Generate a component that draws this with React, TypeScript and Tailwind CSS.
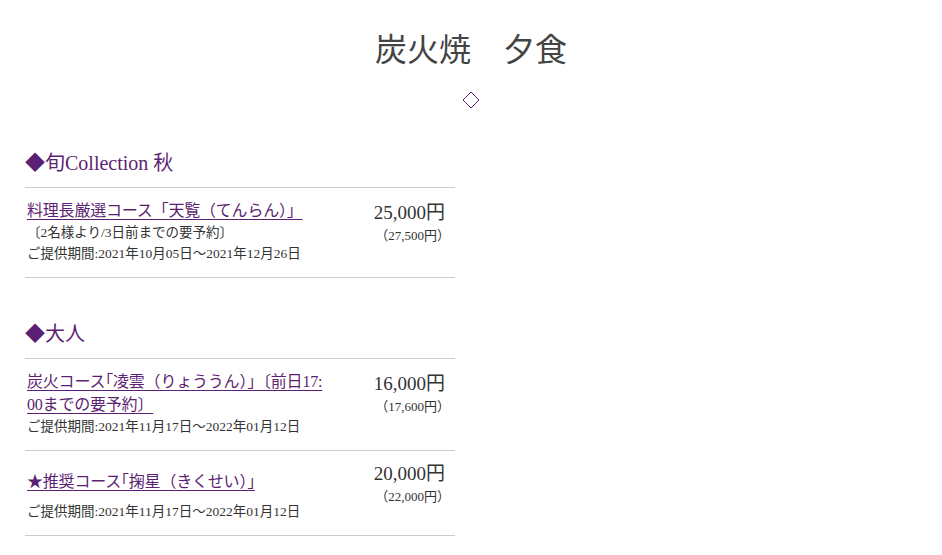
const font = "font-['Liberation_Serif','Noto_Sans_CJK_JP',serif]";

type Course = {
  title: string;
  note?: string;
  period: string;
  price: string;
  taxed: string;
  extraTop?: boolean;
};

const sections: { name: string; courses: Course[] }[] = [
  {
    name: "旬Collection 秋",
    courses: [
      {
        title: "料理長厳選コース「天覧（てんらん）」",
        note: "〔2名様より/3日前までの要予約〕",
        period: "ご提供期間:2021年10月05日～2021年12月26日",
        price: "25,000円",
        taxed: "（27,500円）",
      },
    ],
  },
  {
    name: "大人",
    courses: [
      {
        title: "炭火コース｢凌雲（りょううん）｣〔前日17:00までの要予約〕",
        period: "ご提供期間:2021年11月17日～2022年01月12日",
        price: "16,000円",
        taxed: "（17,600円）",
      },
      {
        title: "★推奨コース｢掬星（きくせい）｣",
        period: "ご提供期間:2021年11月17日～2022年01月12日",
        price: "20,000円",
        taxed: "（22,000円）",
        extraTop: true,
      },
    ],
  },
];

function CourseRow({ c }: { c: Course }) {
  return (
    <div className="flex border-b border-[#cccccc] pl-[2px] pr-[10px] pt-[11px] pb-[13px]">
      <div className="w-[300px]">
        <a
          href="#"
          className={`block break-all text-[16px] leading-[23px] tracking-[-0.2px] text-[#5c1f73] underline underline-offset-[3px] ${
            c.extraTop ? "pt-[8px] pb-[8px]" : ""
          }`}
        >
          {c.title}
        </a>
        {c.note && (
          <p className="text-[13.5px] leading-[21px] text-[#333333]">{c.note}</p>
        )}
        <p className="text-[13.5px] leading-[21px] text-[#333333] whitespace-nowrap">{c.period}</p>
      </div>
      <div className="flex-1 flex flex-col items-end text-[#333333]">
        <span className={`text-[19px] leading-[27px] ${c.extraTop ? "-mt-[2px]" : ""}`}>{c.price}</span>
        <span className="text-[13px] leading-[20px] -mr-[5px]">{c.taxed}</span>
      </div>
    </div>
  );
}

export default function App() {
  return (
    <div className={`${font} bg-white min-h-screen w-[942px] text-[#333333]`}>
      <h1 className="pt-[30px] text-center text-[32px] leading-[40px] text-[#444444]">
        炭火焼　夕食
      </h1>
      <div className="flex justify-center mt-[21px]">
        <svg width="18" height="18" viewBox="0 0 18 18">
          <polygon points="9,1 17,9 9,17 1,9" fill="none" stroke="#5c1f73" strokeWidth="1" />
        </svg>
      </div>
      <div className="w-[430px] ml-[25px]">
        {sections.map((s, i) => (
          <section key={s.name} className={i === 0 ? "mt-[40px]" : "mt-[42px]"}>
            <h2 className="text-[20px] leading-[28px] text-[#5c1f73] mb-[10px]">◆{s.name}</h2>
            <div className="border-t border-[#cccccc]">
              {s.courses.map((c) => (
                <CourseRow key={c.title} c={c} />
              ))}
            </div>
          </section>
        ))}
      </div>
    </div>
  );
}
